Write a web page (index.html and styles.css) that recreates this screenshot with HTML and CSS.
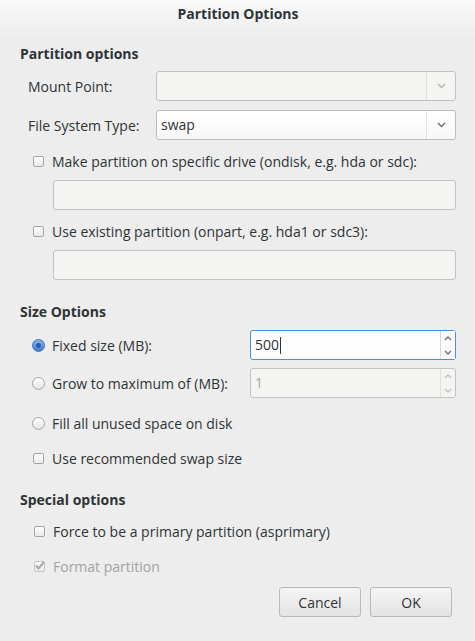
FILE: index.html
```html
<!DOCTYPE html>
<html>
<head>
<meta charset="utf-8">
<title>Partition Options</title>
<link rel="stylesheet" href="styles.css">
</head>
<body>
<div class="dialog">
  <div class="titlebar"><span class="title">Partition Options</span></div>
  <div class="content">
    <div class="heading h-first">Partition options</div>

    <div class="form-row r-mount">
      <span class="form-label">Mount Point:</span>
      <div class="combo combo-disabled">
        <div class="combo-text"></div>
        <div class="combo-btn"><svg width="9" height="6" viewBox="0 0 9 6"><path d="M1 1 L4.5 4.5 L8 1" fill="none" stroke="#b4b4b4" stroke-width="1.5"/></svg></div>
      </div>
    </div>

    <div class="form-row r-fs">
      <span class="form-label">File System Type:</span>
      <div class="combo combo-active">
        <div class="combo-text">swap</div>
        <div class="combo-btn"><svg width="9" height="6" viewBox="0 0 9 6"><path d="M1 1 L4.5 4.5 L8 1" fill="none" stroke="#6e6e6e" stroke-width="1.5"/></svg></div>
      </div>
    </div>

    <div class="check-row r-check1">
      <span class="checkbox"></span>
      <span class="opt-text">Make partition on specific drive (ondisk, e.g. hda or sdc):</span>
    </div>
    <div class="entry r-entry"></div>

    <div class="check-row r-check2">
      <span class="checkbox"></span>
      <span class="opt-text">Use existing partition (onpart, e.g. hda1 or sdc3):</span>
    </div>
    <div class="entry r-entry"></div>

    <div class="heading h-next">Size Options</div>

    <div class="radio-row r-fixed">
      <span class="radio radio-on"><span class="dot"></span></span>
      <span class="opt-text">Fixed size (MB):</span>
      <div class="spin spin-focus">
        <div class="spin-text">500<span class="caret"></span></div>
        <div class="spin-btns">
          <span class="spin-btn"><svg width="8" height="5" viewBox="0 0 8 5"><path d="M1 4 L4 1 L7 4" fill="none" stroke="#6e6e6e" stroke-width="1.3"/></svg></span>
          <span class="spin-btn"><svg width="8" height="5" viewBox="0 0 8 5"><path d="M1 1 L4 4 L7 1" fill="none" stroke="#6e6e6e" stroke-width="1.3"/></svg></span>
        </div>
      </div>
    </div>

    <div class="radio-row r-grow">
      <span class="radio"></span>
      <span class="opt-text">Grow to maximum of (MB):</span>
      <div class="spin spin-disabled">
        <div class="spin-text">1</div>
        <div class="spin-btns">
          <span class="spin-btn"><svg width="8" height="5" viewBox="0 0 8 5"><path d="M1 4 L4 1 L7 4" fill="none" stroke="#c2c2c2" stroke-width="1.3"/></svg></span>
          <span class="spin-btn"><svg width="8" height="5" viewBox="0 0 8 5"><path d="M1 1 L4 4 L7 1" fill="none" stroke="#c2c2c2" stroke-width="1.3"/></svg></span>
        </div>
      </div>
    </div>

    <div class="radio-row r-fill">
      <span class="radio"></span>
      <span class="opt-text">Fill all unused space on disk</span>
    </div>

    <div class="check-row r-swap">
      <span class="checkbox"></span>
      <span class="opt-text">Use recommended swap size</span>
    </div>

    <div class="heading h-next">Special options</div>

    <div class="check-row special r-force">
      <span class="checkbox"></span>
      <span class="opt-text">Force to be a primary partition (asprimary)</span>
    </div>

    <div class="check-row special r-format">
      <span class="checkbox checkbox-disabled"><svg width="11" height="10" viewBox="0 0 11 10"><path d="M2 4.5 L4.5 7.5 L10 1" fill="none" stroke="#a9a9a9" stroke-width="2"/></svg></span>
      <span class="opt-text text-disabled">Format partition</span>
    </div>

    <div class="button-row">
      <button class="btn">Cancel</button>
      <button class="btn">OK</button>
    </div>
  </div>
</div>
</body>
</html>
```

FILE: styles.css
```css
html, body {
  margin: 0;
  padding: 0;
}
body {
  width: 475px;
  height: 641px;
  background: #ededed;
  font-family: "Open Sans", "DejaVu Sans", sans-serif;
  font-size: 14px;
  color: #2e3436;
  overflow: hidden;
}
.dialog {
  width: 475px;
  height: 641px;
  display: flex;
  flex-direction: column;
}
.titlebar {
  height: 38px;
  background: linear-gradient(#fafafa, #ededed);
  display: flex;
  justify-content: center;
}
.title {
  font-weight: bold;
  line-height: 27px;
  padding-left: 1px;
}
.content {
  display: flex;
  flex-direction: column;
  padding: 0 19px 0 20px;
}
.heading {
  font-weight: bold;
  height: 20px;
  line-height: 20px;
}
.h-first { margin-top: 6px; }
.h-next { margin-top: 22px; }

.form-row {
  display: flex;
  align-items: center;
  height: 30px;
  padding-left: 8px;
}
.r-mount { margin-top: 7px; }
.r-fs { margin-top: 9px; }
.form-label {
  width: 128px;
  flex: none;
}
.combo {
  flex: 1;
  height: 30px;
  box-sizing: border-box;
  border: 1px solid #c2c2bf;
  border-radius: 3px;
  display: flex;
}
.combo-disabled {
  background: #f4f4f2;
}
.combo-active {
  background: linear-gradient(#ffffff, #f7f7f7);
  border-color: #bcbcb9;
}
.combo-text {
  flex: 1;
  padding-left: 4px;
  line-height: 28px;
}
.combo-btn {
  width: 28px;
  border-left: 1px solid #dededb;
  display: flex;
  align-items: center;
  justify-content: center;
}
.combo-active .combo-btn {
  border-left-color: #e2e2df;
  box-shadow: inset 1px 0 0 #ffffff;
}

.check-row, .radio-row {
  display: flex;
  align-items: center;
  height: 20px;
  gap: 8px;
}
.check-row { padding-left: 13px; }
.check-row.special { padding-left: 14px; }
.radio-row { padding-left: 12px; height: 30px; }
.r-check1, .r-check2 { margin-top: 11px; }
.r-entry { margin-top: 9px; }
.r-fixed { margin-top: 8px; }
.r-grow { margin-top: 8px; }
.r-fill { margin-top: 15px; height: 20px; }
.r-swap { margin-top: 15px; }
.r-force { margin-top: 11px; }
.r-format { margin-top: 15px; }

.checkbox {
  width: 11px;
  height: 11px;
  box-sizing: border-box;
  border: 1px solid #a4a4a4;
  border-radius: 2px;
  background: linear-gradient(#ffffff, #e9e9e9);
  flex: none;
  position: relative;
}
.checkbox-disabled {
  border-color: #c6c6c6;
  background: linear-gradient(#f6f6f6, #ececec);
}
.checkbox-disabled svg {
  position: absolute;
  left: -1px;
  top: -1px;
}
.radio {
  width: 13px;
  height: 13px;
  box-sizing: border-box;
  border: 1px solid #a8a8a8;
  border-radius: 50%;
  background: linear-gradient(#ffffff, #e4e4e4);
  flex: none;
  display: flex;
  align-items: center;
  justify-content: center;
  margin-right: -1px;
}
.radio-on {
  border-color: #3b6fb6;
  background: linear-gradient(#8ab4ec, #3f7fd8);
}
.radio-on .dot {
  width: 5px;
  height: 5px;
  border-radius: 50%;
  background: #2a5ea8;
}
.opt-text { white-space: nowrap; }
.text-disabled { color: #a2a2a2; }

.entry {
  margin-left: 33px;
  height: 30px;
  box-sizing: border-box;
  border: 1px solid #c2c2bf;
  border-radius: 3px;
  background: #f4f4f2;
}

.spin {
  margin-left: auto;
  width: 206px;
  height: 30px;
  box-sizing: border-box;
  border: 1px solid #c2c2bf;
  border-radius: 3px;
  display: flex;
}
.spin-focus {
  border-color: #4a90d9;
  background: linear-gradient(#fcfcfc, #ffffff);
}
.spin-disabled {
  background: #f4f4f2;
  color: #a4a4a4;
}
.spin-text {
  flex: 1;
  padding-left: 4px;
  line-height: 28px;
  display: flex;
  align-items: center;
}
.caret {
  width: 1px;
  height: 17px;
  background: #2e3436;
  margin-left: 1px;
}
.spin-btns {
  width: 14px;
  border-left: 1px solid #dededb;
  display: flex;
  flex-direction: column;
}
.spin-focus .spin-btns {
  border-left-color: #d8d8d5;
  background: #fbfbfb;
}
.spin-btn {
  flex: 1;
  display: flex;
  align-items: center;
  justify-content: center;
}

.button-row {
  display: flex;
  justify-content: flex-end;
  gap: 9px;
  margin-top: 11px;
  padding-right: 4px;
}
.btn {
  width: 82px;
  height: 30px;
  box-sizing: border-box;
  border: 1px solid #b8b8b5;
  border-radius: 3px;
  background: linear-gradient(#f5f5f5, #e3e3e3);
  font-family: inherit;
  font-size: 14px;
  color: #2e3436;
  padding: 0;
}
```
